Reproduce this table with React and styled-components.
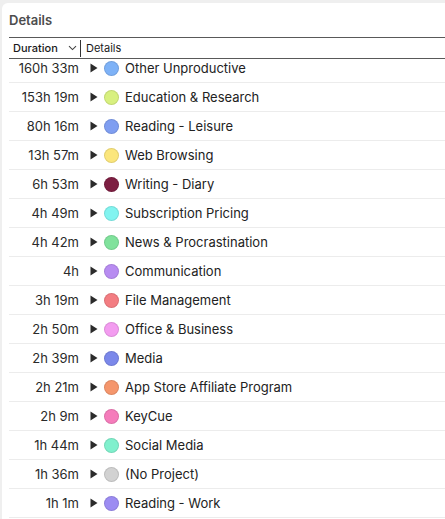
import React from "react";
import styled, { createGlobalStyle } from "styled-components";

const Global = createGlobalStyle`
  html, body { margin: 0; padding: 0; background: #efefef; }
  body { font-family: Inter, "Liberation Sans", sans-serif; -webkit-font-smoothing: antialiased; }
`;

const Window = styled.div`
  width: 445px;
  height: 519px;
  padding: 3px 0 0 2px;
  box-sizing: border-box;
  overflow: hidden;
`;

const Panel = styled.div`
  background: #fff;
  height: 100%;
  border-top-left-radius: 6px;
  display: flex;
  flex-direction: column;
  padding-left: 7px;
  overflow: hidden;
`;

const Title = styled.div`
  height: 34px;
  display: flex;
  align-items: center;
  box-sizing: border-box;
  font-size: 13px;
  font-weight: 600;
  color: #4d4d4d;
`;

const Header = styled.div`
  display: grid;
  grid-template-columns: 72px 1fr;
  height: 22px;
  border-top: 1px solid #595959;
  border-bottom: 1px solid #595959;
  box-sizing: border-box;
  font-size: 11px;
  color: #1a1a1a;
  align-items: center;
`;

const HeadCell = styled.div`
  display: flex;
  align-items: center;
  justify-content: space-between;
  height: 17px;
  padding-left: ${(p) => p.$pl}px;
  border-right: ${(p) => (p.$sep ? "1px solid #333" : "none")};
  font-weight: ${(p) => (p.$bold ? 500 : 400)};
  padding-right: ${(p) => (p.$sep ? 3 : 0)}px;
`;

const Rows = styled.div`
  flex: 1;
  overflow: hidden;
`;

const RowList = styled.div`
  margin-top: -5px;
`;

const Row = styled.div`
  display: grid;
  grid-template-columns: 72px 1fr;
  height: 29px;
  box-sizing: border-box;
  border-bottom: 1px solid #ececec;
  align-items: center;
  font-size: 13px;
  color: #222;
`;

const Dur = styled.div`
  text-align: right;
  padding-right: 2px;
  color: #2a2a2a;
`;

const Item = styled.div`
  display: flex;
  align-items: center;
  padding-left: 9px;
`;

const Tri = styled.svg`
  width: 8px;
  height: 10px;
  flex: none;
`;

const Dot = styled.span`
  width: 15px;
  height: 15px;
  border-radius: 50%;
  background: ${(p) => p.$c};
  box-shadow: inset 0 0 0 1px rgba(0, 0, 0, 0.1);
  margin-left: 6px;
  margin-right: 6px;
  flex: none;
`;

const data = [
  ["160h 33m", "Other Unproductive", "#7eb2f7"],
  ["153h 19m", "Education & Research", "#d8f07f"],
  ["80h 16m", "Reading - Leisure", "#7f9ef1"],
  ["13h 57m", "Web Browsing", "#fbe67c"],
  ["6h 53m", "Writing - Diary", "#7d1f42"],
  ["4h 49m", "Subscription Pricing", "#82f4f0"],
  ["4h 42m", "News & Procrastination", "#80e29c"],
  ["4h", "Communication", "#b88cf1"],
  ["3h 19m", "File Management", "#f37d82"],
  ["2h 50m", "Office & Business", "#f39cf0"],
  ["2h 39m", "Media", "#7b88ea"],
  ["2h 21m", "App Store Affiliate Program", "#f5966c"],
  ["2h 9m", "KeyCue", "#f57cbb"],
  ["1h 44m", "Social Media", "#80f0cd"],
  ["1h 36m", "(No Project)", "#d2d2d2"],
  ["1h 1m", "Reading - Work", "#9c8cf2"],
];

export default function App() {
  return (
    <Window>
      <Global />
      <Panel>
        <Title>Details</Title>
        <Header>
          <HeadCell $pl={4} $sep $bold>
            <span>Duration</span>
            <svg width="9" height="6" viewBox="0 0 9 6">
              <path d="M1 1.2 L4.5 4.6 L8 1.2" fill="none" stroke="#444" strokeWidth="1.1" />
            </svg>
          </HeadCell>
          <HeadCell $pl={5}>Details</HeadCell>
        </Header>
        <Rows>
          <RowList>
            {data.map(([d, n, c]) => (
              <Row key={n}>
                <Dur>{d}</Dur>
                <Item>
                  <Tri viewBox="0 0 8 10">
                    <path d="M0.5 0.5 L7.5 5 L0.5 9.5 Z" fill="#2b2b2b" />
                  </Tri>
                  <Dot $c={c} />
                  <span>{n}</span>
                </Item>
              </Row>
            ))}
          </RowList>
        </Rows>
      </Panel>
    </Window>
  );
}
